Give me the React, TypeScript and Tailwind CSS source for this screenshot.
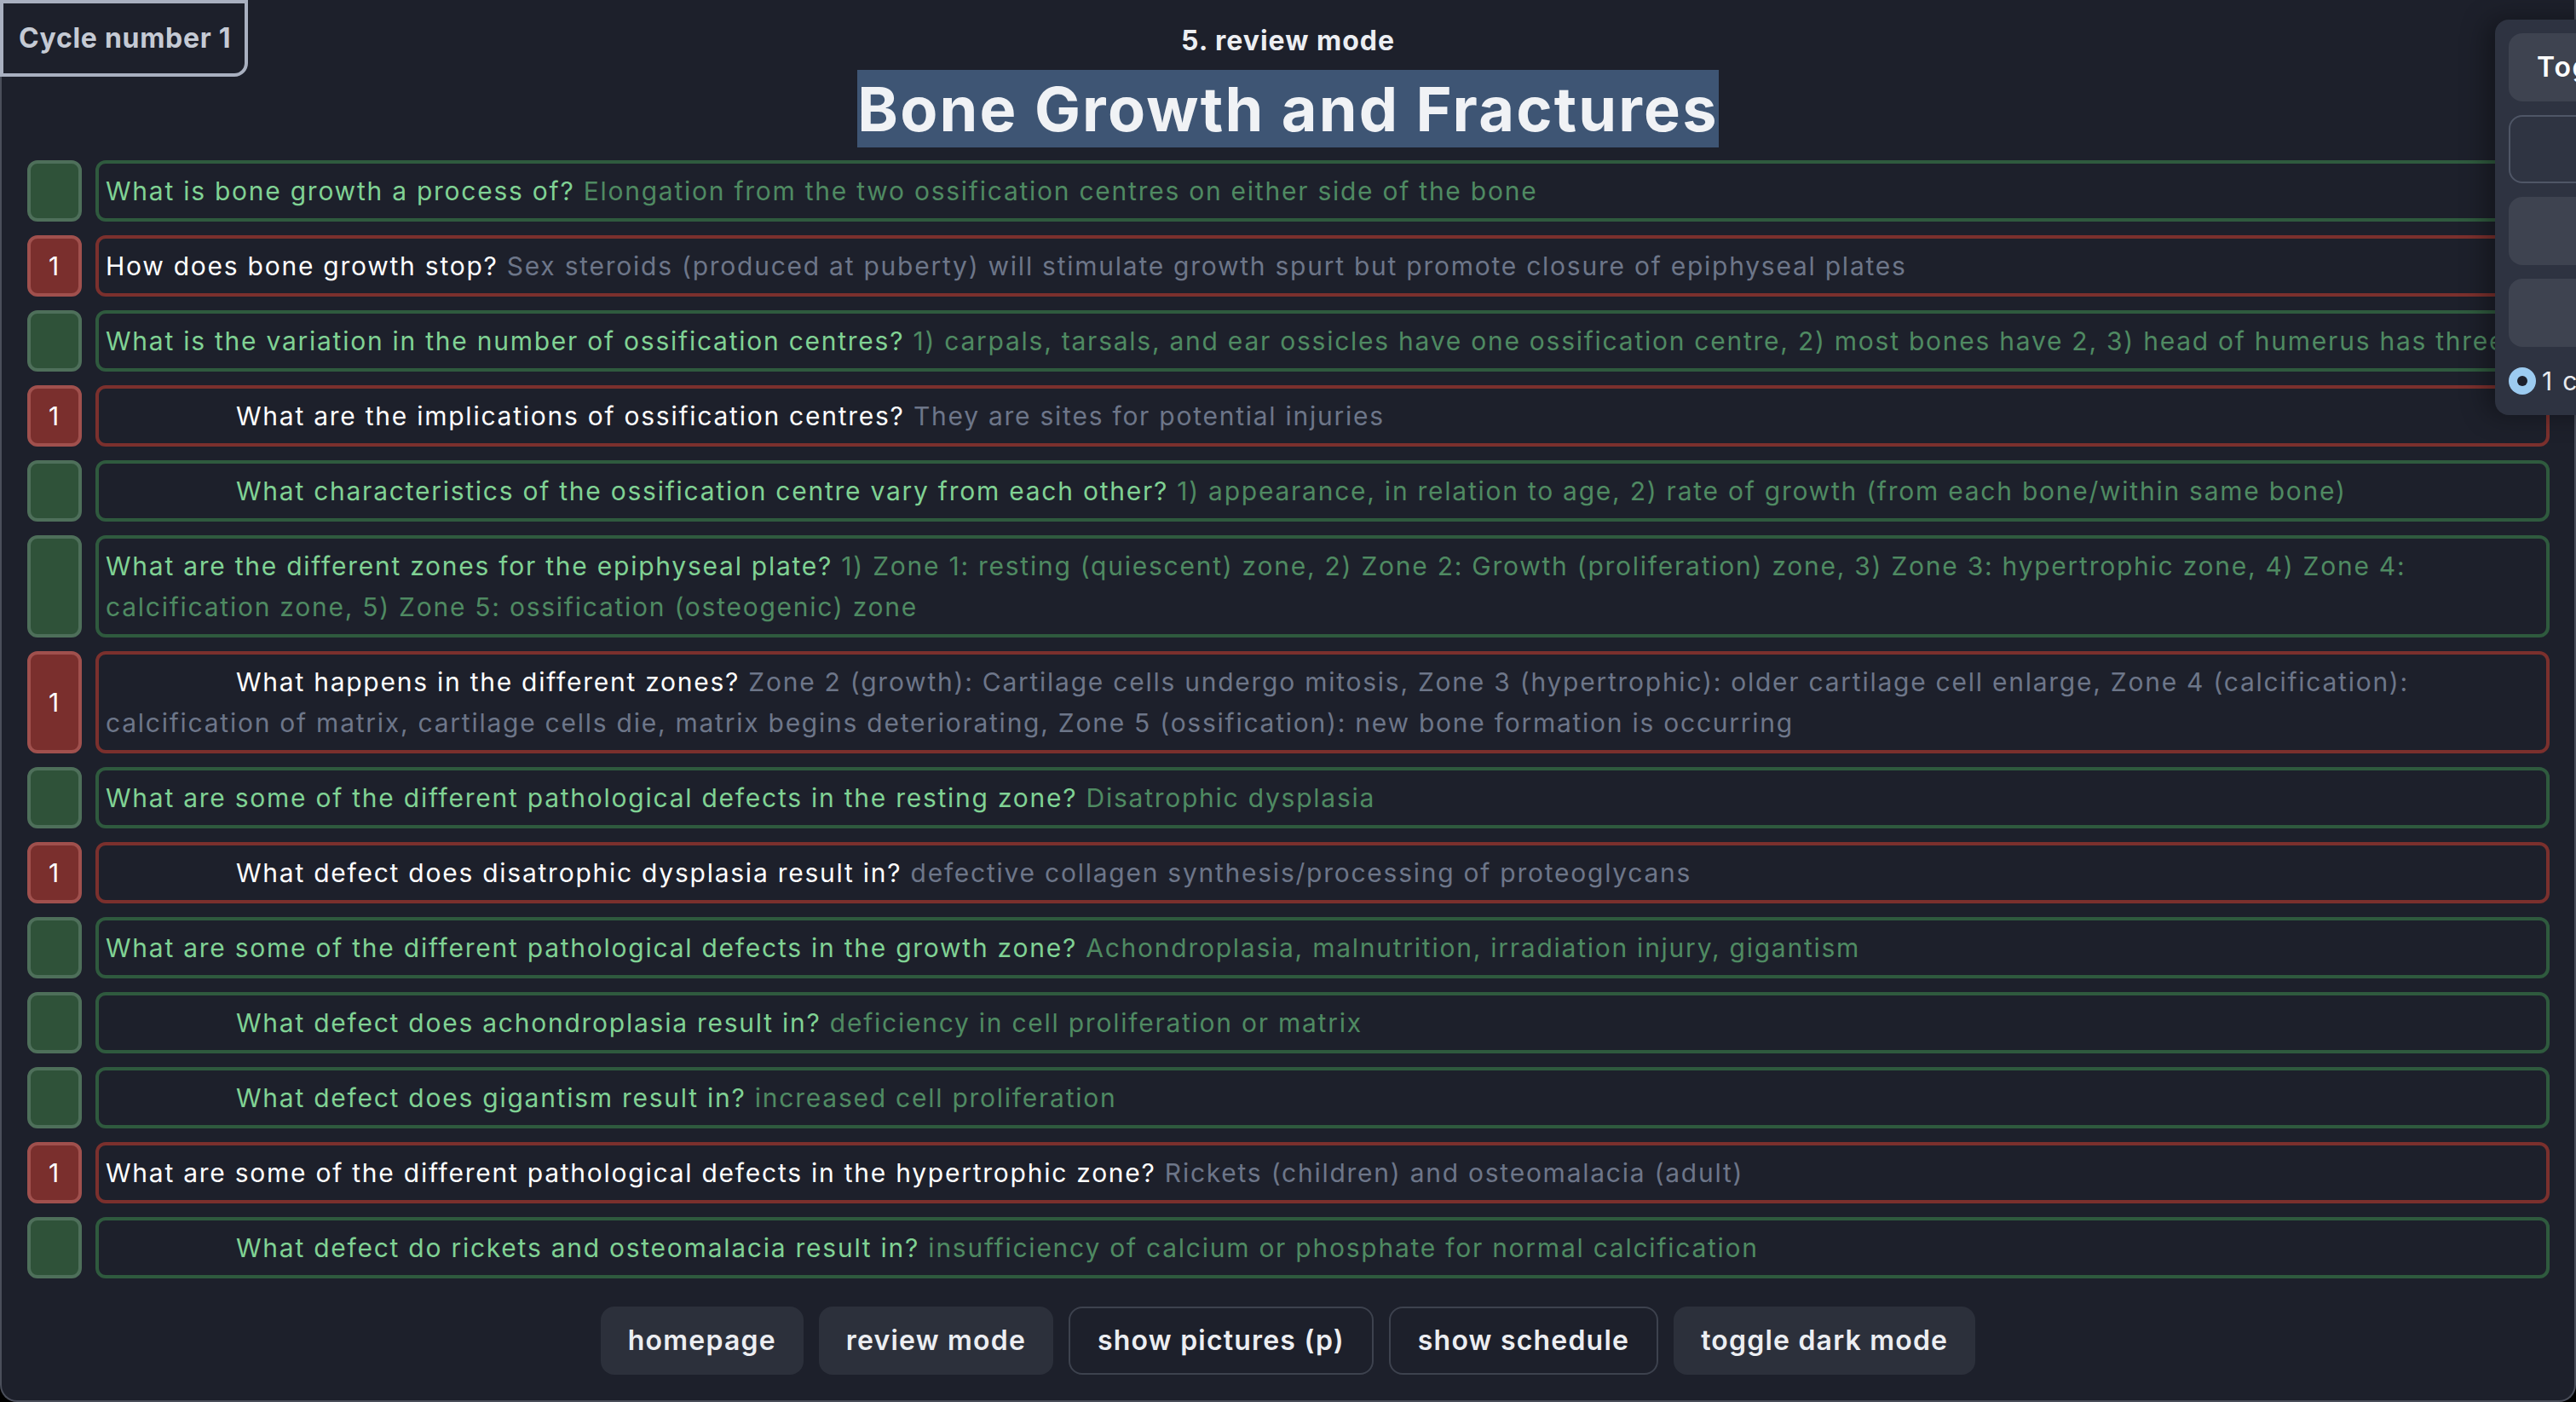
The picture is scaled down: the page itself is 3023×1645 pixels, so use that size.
const rows: { q: string; a: string; ok: boolean; indent?: boolean }[] = [
  { q: "What is bone growth a process of?", a: "Elongation from the two ossification centres on either side of the bone", ok: true },
  { q: "How does bone growth stop?", a: "Sex steroids (produced at puberty) will stimulate growth spurt but promote closure of epiphyseal plates", ok: false },
  { q: "What is the variation in the number of ossification centres?", a: "1) carpals, tarsals, and ear ossicles have one ossification centre, 2) most bones have 2, 3) head of humerus has three", ok: true },
  { q: "What are the implications of ossification centres?", a: "They are sites for potential injuries", ok: false, indent: true },
  { q: "What characteristics of the ossification centre vary from each other?", a: "1) appearance, in relation to age, 2) rate of growth (from each bone/within same bone)", ok: true, indent: true },
  { q: "What are the different zones for the epiphyseal plate?", a: "1) Zone 1: resting (quiescent) zone, 2) Zone 2: Growth (proliferation) zone, 3) Zone 3: hypertrophic zone, 4) Zone 4: calcification zone, 5) Zone 5: ossification (osteogenic) zone", ok: true },
  { q: "What happens in the different zones?", a: "Zone 2 (growth): Cartilage cells undergo mitosis, Zone 3 (hypertrophic): older cartilage cell enlarge, Zone 4 (calcification): calcification of matrix, cartilage cells die, matrix begins deteriorating, Zone 5 (ossification): new bone formation is occurring", ok: false, indent: true },
  { q: "What are some of the different pathological defects in the resting zone?", a: "Disatrophic dysplasia", ok: true },
  { q: "What defect does disatrophic dysplasia result in?", a: "defective collagen synthesis/processing of proteoglycans", ok: false, indent: true },
  { q: "What are some of the different pathological defects in the growth zone?", a: "Achondroplasia, malnutrition, irradiation injury, gigantism", ok: true },
  { q: "What defect does achondroplasia result in?", a: "deficiency in cell proliferation or matrix", ok: true, indent: true },
  { q: "What defect does gigantism result in?", a: "increased cell proliferation", ok: true, indent: true },
  { q: "What are some of the different pathological defects in the hypertrophic zone?", a: "Rickets (children) and osteomalacia (adult)", ok: false },
  { q: "What defect do rickets and osteomalacia result in?", a: "insufficiency of calcium or phosphate for normal calcification", ok: true, indent: true },
];

function Row({ q, a, ok, indent }: { q: string; a: string; ok: boolean; indent?: boolean }) {
  return (
    <div className="flex items-stretch gap-4">
      <div
        className={
          ok
            ? "flex w-16 shrink-0 items-center justify-center rounded-[12px] border-4 border-[#4e6f5a] bg-[#2f5239]"
            : "flex w-16 shrink-0 items-center justify-center rounded-[12px] border-4 border-[#a0504d] bg-[#7a2f2d] text-white"
        }
      >
        {ok ? "" : "1"}
      </div>
      <div
        className={
          ok
            ? "flex-1 rounded-[12px] border-4 border-[#2f5a3e] px-2 py-2"
            : "flex-1 rounded-[12px] border-4 border-[#7b302d] px-2 py-2"
        }
      >
        <p className={indent ? "indent-[153px]" : ""}>
          <span className={ok ? "text-[#80d294]" : "text-white"}>{q}</span>{" "}
          <span className={ok ? "text-[#4f8a62]" : "text-[#6d7689]"}>{a}</span>
        </p>
      </div>
    </div>
  );
}

export default function App() {
  return (
    <div className="h-[1645px] w-[3023px] overflow-hidden bg-black font-['Inter',sans-serif]">
      <div className="relative h-full rounded-b-[20px] border-x-2 border-b-2 border-[#4a4e5a] bg-[#1d202b] text-[30px] leading-[48px] tracking-[1.75px]">
        {/* cycle badge */}
        <div className="absolute -left-[2px] top-0 h-[90px] w-[291px] rounded-br-[16px] border-4 border-[#a9b0c0] bg-[#1d202b] pl-[18px] text-[32px] font-bold leading-[82px] tracking-[0.7px] text-[#c5cad4]">
          Cycle number 1
        </div>

        <div className="flex flex-col items-center pt-[28px]">
          <h2 className="text-[32px] font-bold leading-[40px] tracking-[1px] text-[#eceef2]">5. review mode</h2>
          <h1 className="mt-[14px] inline-block bg-[#3e5574] text-[72px] font-bold leading-[91px] tracking-[2.2px] text-[#f0f2f5]">
            Bone Growth and Fractures
          </h1>
        </div>

        <div className="mt-[15px] flex flex-col gap-4 pl-[30px] pr-[29px]">
          {rows.map((r, i) => (
            <Row key={i} {...r} />
          ))}
        </div>

        <div className="mt-[33px] flex justify-center gap-[18px] text-[32px] font-semibold tracking-[1.2px] text-[#eceef2]">
          <button className="h-20 rounded-[16px] bg-[#2c303b] px-8">homepage</button>
          <button className="h-20 rounded-[16px] bg-[#2c303b] px-8">review mode</button>
          <button className="h-20 rounded-[16px] border-2 border-[#3d424e] px-8">show pictures (p)</button>
          <button className="h-20 rounded-[16px] border-2 border-[#3d424e] px-8">show schedule</button>
          <button className="h-20 rounded-[16px] bg-[#2c303b] px-8">toggle dark mode</button>
        </div>

        {/* side panel, mostly off screen */}
        <div className="absolute left-[2926px] top-[23px] flex w-[420px] flex-col gap-4 rounded-[16px] bg-[#2e3341] p-4 shadow-[-10px_0_30px_rgba(0,0,0,0.35)]">
          <button className="h-20 rounded-[16px] bg-[#3e4350] pl-[33px] text-left text-[32px] font-semibold text-white">
            Toggle
          </button>
          <div className="h-20 rounded-[16px] border-2 border-[#4f5666] bg-[#2f3442]" />
          <div className="h-20 rounded-[16px] bg-[#3e4350]" />
          <div className="h-20 rounded-[16px] bg-[#3e4350]" />
          <div className="flex h-12 items-center gap-[7px] text-[30px] text-[#e8eaee]">
            <span className="flex h-8 w-8 items-center justify-center rounded-full bg-[#9ccbf0]">
              <span className="h-3 w-3 rounded-full bg-[#1d202b]" />
            </span>
            <span>1 cycle</span>
          </div>
        </div>
      </div>
    </div>
  );
}
